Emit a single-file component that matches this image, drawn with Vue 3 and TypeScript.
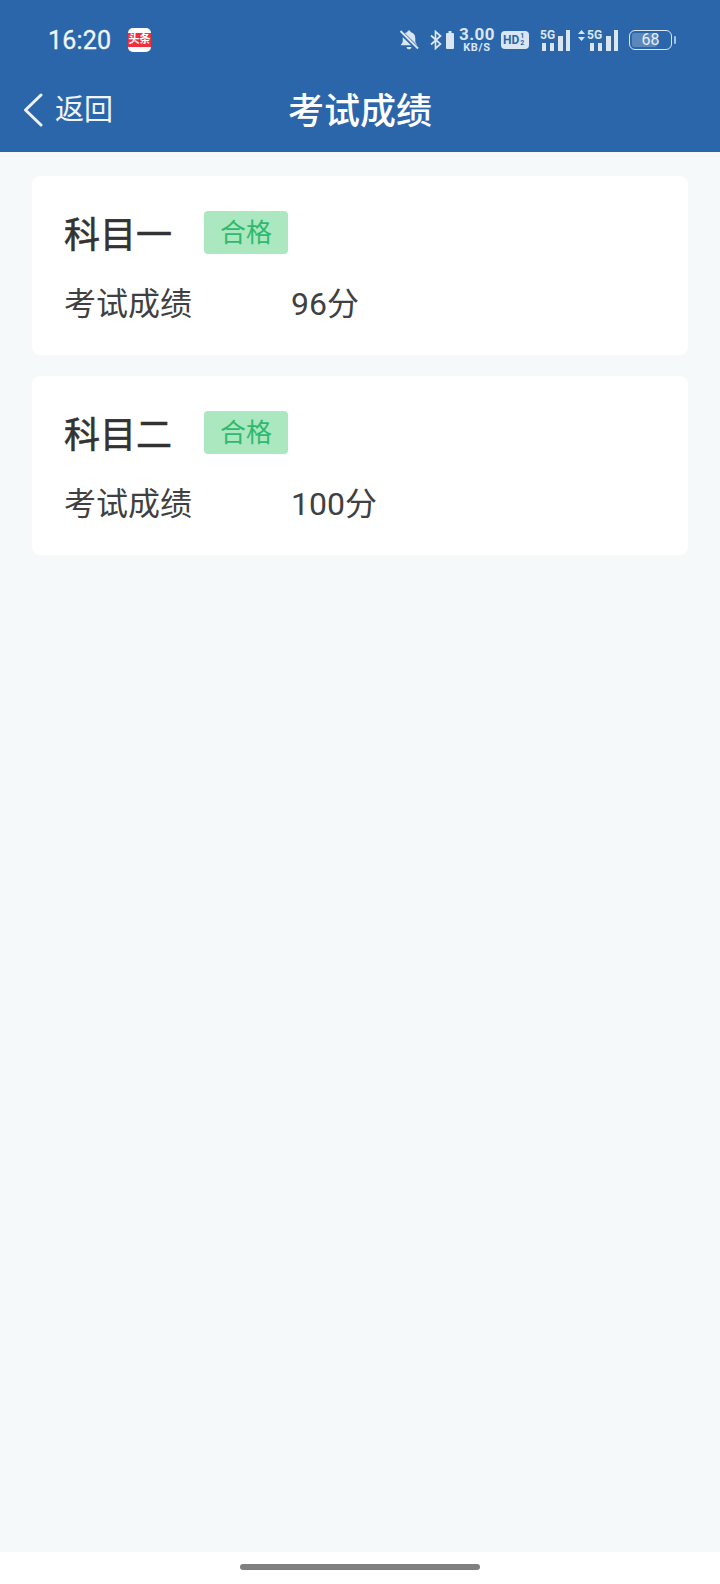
<script setup lang="ts">
const results = [
  { name: '科目一', score: '96分' },
  { name: '科目二', score: '100分' }
]
</script>

<template>
  <div class="page">
    <header class="header">
      <div class="status">
        <span class="time">16:20</span>
        <span class="app-badge"><span class="app-text">头条</span></span>
        <div class="status-right">
          <svg class="bell" width="22" height="22" viewBox="0 0 22 22">
            <path d="M11 1.500c1 0 1.600.7 1.700 1.600 3 .8 4.600 3.200 4.600 6.300v3.600l2 3.200H2.700l2-3.200V9.400c0-3.100 1.600-5.500 4.600-6.300.1-.9.700-1.600 1.700-1.600z" fill="#dbe6f3" />
            <path d="M8.500 18h5c-.2 1.400-1.200 2.300-2.500 2.300S8.700 19.400 8.500 18z" fill="#dbe6f3" />
            <path d="M2 2.500 L20 20" stroke="#2c66aa" stroke-width="4.500" />
            <path d="M2.500 2 L20 19.500" stroke="#dbe6f3" stroke-width="2" />
          </svg>
          <svg class="bt" width="12" height="20" viewBox="0 0 12 20">
            <path d="M1 5.500 L10.500 14 L5.500 18.500 V1.500 L10.500 6 L1 14.500" fill="none" stroke="#dbe6f3" stroke-width="1.700" />
          </svg>
          <svg class="mini-bat" width="8" height="18" viewBox="0 0 8 18">
            <path d="M2.500 0h3v2h1.500a1 1 0 0 1 1 1v14a1 1 0 0 1-1 1H1a1 1 0 0 1-1-1V3a1 1 0 0 1 1-1h1.500z" fill="#dbe6f3" />
          </svg>
          <div class="speed">
            <span class="speed-num">3.00</span>
            <span class="speed-unit">KB/S</span>
          </div>
          <div class="hd">
            <span class="hd-text">HD</span>
            <span class="hd-frac"><span>1</span><span>2</span></span>
          </div>
          <div class="signal first">
            <span class="net">5G</span>
            <svg width="31" height="21" viewBox="0 0 31 21">
              <rect x="2" y="13" width="4" height="8" fill="#dbe6f3" />
              <rect x="10" y="13" width="4" height="8" fill="#dbe6f3" />
              <rect x="18" y="6" width="5" height="15" fill="#dbe6f3" />
              <rect x="26" y="0" width="4" height="21" fill="#dbe6f3" />
            </svg>
          </div>
          <div class="signal second">
            <svg class="arrows" width="7" height="11" viewBox="0 0 7 11">
              <path d="M3.500 0 L7 4 H0z M3.500 11 L0 7 H7z" fill="#dbe6f3" />
            </svg>
            <span class="net net2">5G</span>
            <svg width="31" height="21" viewBox="0 0 31 21">
              <rect x="2" y="13" width="4" height="8" fill="#dbe6f3" />
              <rect x="10" y="13" width="4" height="8" fill="#dbe6f3" />
              <rect x="18" y="6" width="5" height="15" fill="#dbe6f3" />
              <rect x="26" y="0" width="4" height="21" fill="#dbe6f3" />
            </svg>
          </div>
          <div class="battery">
            <div class="battery-box">
              <div class="battery-fill" style="width: 68%"></div>
              <span class="battery-num">68</span>
            </div>
            <span class="battery-tip"></span>
          </div>
        </div>
      </div>
      <div class="nav">
        <div class="back">
          <svg width="22" height="34" viewBox="0 0 22 34">
            <path d="M19 2 L3.500 17 L19 32" fill="none" stroke="#eef3f9" stroke-width="3" stroke-linecap="round" stroke-linejoin="round" />
          </svg>
          <span class="back-text">返回</span>
        </div>
        <div class="title">考试成绩</div>
      </div>
    </header>

    <main class="list">
      <section class="card" v-for="item in results" :key="item.name">
        <div class="card-top">
          <span class="subject">{{ item.name }}</span>
          <span class="tag">合格</span>
        </div>
        <div class="row">
          <span class="label">考试成绩</span>
          <span class="score">{{ item.score }}</span>
        </div>
      </section>
    </main>

    <footer class="home">
      <span class="home-bar"></span>
    </footer>
  </div>
</template>

<style>
html,
body {
  margin: 0;
  background: #f5f9fa;
}
</style>

<style scoped>
.page {
  width: 720px;
  height: 1584px;
  display: flex;
  flex-direction: column;
  background: #f5f9fa;
  font-family: Roboto, "Noto Sans CJK SC", sans-serif;
  overflow: hidden;
}

.header {
  height: 152px;
  flex-shrink: 0;
  background: #2c66aa;
  color: #fff;
}

.status {
  height: 80px;
  display: flex;
  align-items: center;
  padding-left: 48px;
  box-sizing: border-box;
}

.time {
  font-size: 25px;
  font-weight: 400;
  color: #f0f5fa;
  letter-spacing: 0.2px;
  -webkit-text-stroke: 0.3px #f0f5fa;
  width: 80px;
}

.app-badge {
  width: 23px;
  height: 24px;
  background: #fff;
  border-radius: 5px;
  display: flex;
  align-items: center;
  overflow: hidden;
}

.app-text {
  display: block;
  width: 100%;
  height: 14px;
  line-height: 14px;
  background: #ee2f3c;
  color: #fff;
  font-size: 11px;
  font-weight: 700;
  text-align: center;
  white-space: nowrap;
}

.status-right {
  display: flex;
  align-items: center;
  height: 80px;
  margin-left: 247px;
  color: #dbe6f3;
}

.bt {
  margin-left: 10px;
}

.mini-bat {
  margin-left: 4px;
}

.speed {
  margin-left: 4px;
  width: 38px;
  display: flex;
  flex-direction: column;
  align-items: center;
  font-weight: 700;
}

.speed-num {
  font-size: 17px;
  height: 14px;
  line-height: 14px;
  letter-spacing: 0.5px;
}

.speed-unit {
  font-size: 11px;
  height: 11px;
  line-height: 11px;
  margin-top: 1px;
  letter-spacing: 0.7px;
}

.hd {
  margin-left: 5px;
  width: 28px;
  height: 18px;
  box-sizing: border-box;
  background: #dbe6f3;
  border-radius: 4px;
  color: #2c66aa;
  display: flex;
  align-items: center;
  padding-left: 2px;
  font-weight: 700;
}

.hd-text {
  font-size: 12px;
  line-height: 16px;
}

.hd-frac {
  display: flex;
  flex-direction: column;
  font-size: 7px;
  line-height: 7px;
  margin-left: 1px;
}

.signal {
  position: relative;
  height: 21px;
  display: flex;
  align-items: flex-end;
}

.signal.first {
  margin-left: 11px;
  width: 31px;
}

.signal.second {
  margin-left: 7px;
  width: 41px;
  justify-content: flex-end;
}

.net {
  position: absolute;
  left: 0;
  top: -1px;
  font-size: 12px;
  line-height: 12px;
  font-weight: 700;
  color: #dbe6f3;
}

.net2 {
  left: 9px;
}

.arrows {
  position: absolute;
  left: 0;
  top: 0;
}

.battery {
  margin-left: 10px;
  display: flex;
  align-items: center;
}

.battery-box {
  position: relative;
  width: 43px;
  height: 20px;
  box-sizing: border-box;
  border: 1.5px solid #dbe6f3;
  border-radius: 6px;
  padding: 2px;
  overflow: hidden;
}

.battery-fill {
  height: 100%;
  background: #5b87bc;
  border-radius: 2px;
}

.battery-num {
  position: absolute;
  inset: 0;
  text-align: center;
  font-size: 16px;
  line-height: 17px;
  color: #e6edf6;
}

.battery-tip {
  width: 2px;
  height: 8px;
  margin-left: 2px;
  background: #a9c1dd;
  border-radius: 1px;
}

.nav {
  position: relative;
  height: 72px;
  display: flex;
  align-items: center;
  justify-content: center;
}

.back {
  position: absolute;
  left: 22px;
  top: 12px;
  display: flex;
  align-items: center;
}

.back-text {
  margin-left: 11px;
  font-size: 29px;
  font-weight: 400;
  line-height: 36px;
  color: #f0f5fa;
}

.title {
  font-size: 36px;
  font-weight: 500;
  color: #fff;
  margin-top: -16px;
}

.list {
  flex: 1;
  padding: 24px 32px 0;
  display: flex;
  flex-direction: column;
  gap: 21px;
}

.card {
  height: 179px;
  box-sizing: border-box;
  background: #fff;
  border-radius: 8px;
  padding: 35px 32px 0;
}

.card-top {
  display: flex;
  align-items: center;
  height: 43px;
}

.subject {
  width: 140px;
  font-size: 36px;
  font-weight: 400;
  color: #333;
  -webkit-text-stroke: 0.6px #333;
  line-height: 43px;
  margin-top: 8px;
}

.tag {
  width: 84px;
  height: 43px;
  border-radius: 4px;
  background: #abe8c0;
  color: #2fb970;
  font-size: 26px;
  font-weight: 400;
  line-height: 45px;
  text-align: center;
}

.row {
  display: flex;
  align-items: center;
  margin-top: 30px;
  color: #404040;
  font-size: 32px;
  font-weight: 400;
  line-height: 40px;
}

.label {
  width: 227px;
}

.home {
  height: 32px;
  flex-shrink: 0;
  background: #fff;
  display: flex;
  justify-content: center;
  padding-top: 12px;
  box-sizing: border-box;
}

.home-bar {
  width: 240px;
  height: 6px;
  border-radius: 3px;
  background: #808080;
}
</style>
